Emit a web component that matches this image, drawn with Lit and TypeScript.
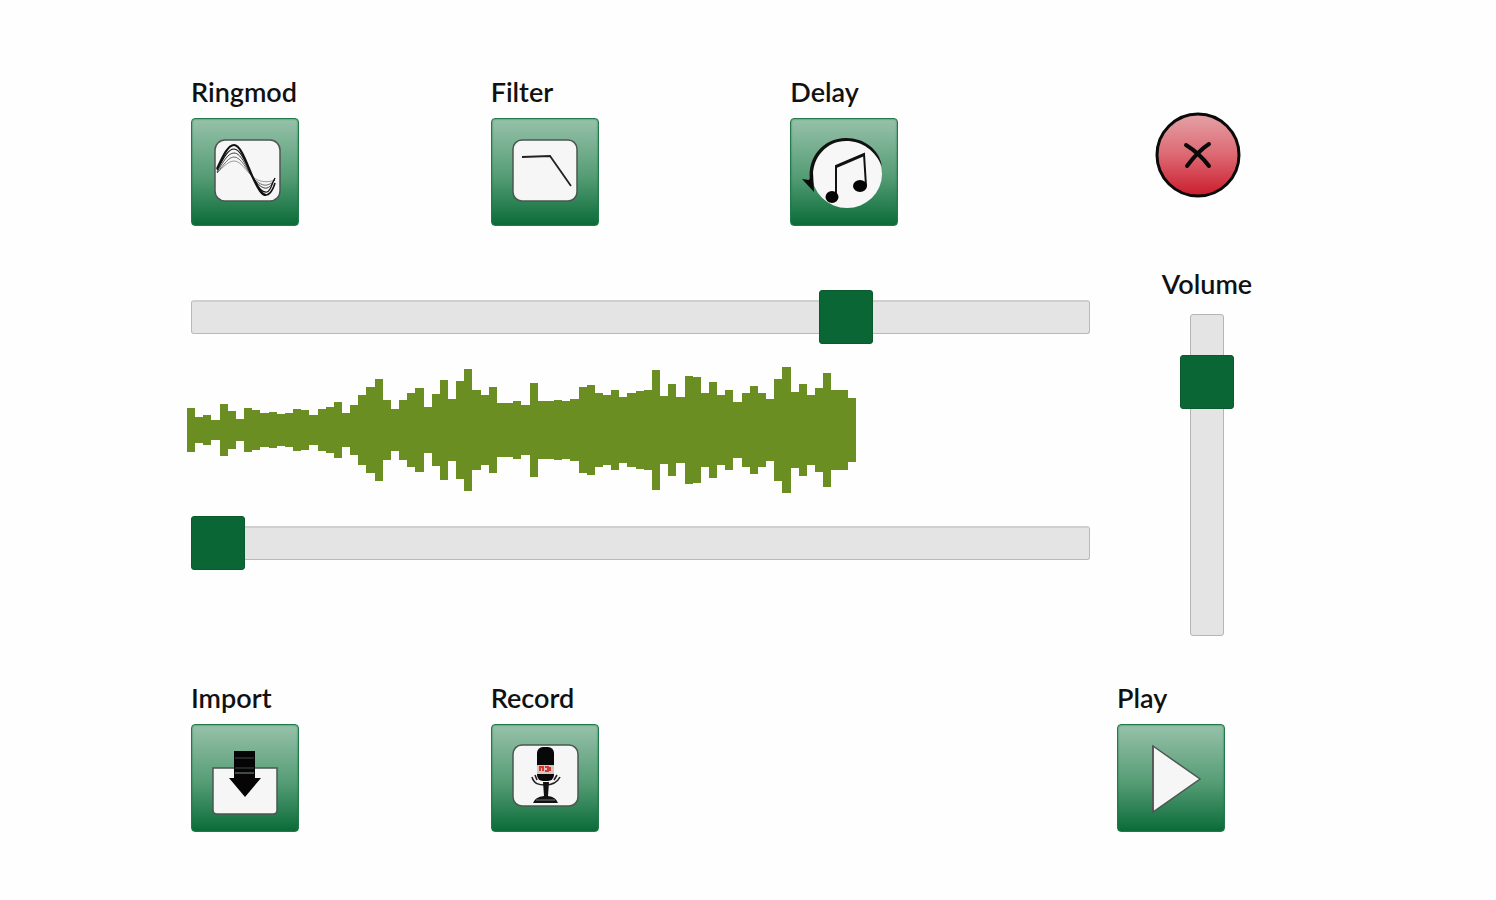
import { LitElement, html, css, svg } from "lit";
import { customElement, state } from "lit/decorators.js";

// Peak amplitude of each waveform bar, drawn mirrored around the centre line.
const PEAKS = [
  66, 40, 46, 30, 78, 56, 34, 66, 59, 50, 54, 48, 50, 64, 60, 44, 62, 70, 84, 52, 74, 105, 130, 154,
  90, 63, 90, 110, 126, 69, 109, 150, 94, 147, 184, 121, 104, 128, 80, 80, 88, 75, 141, 87, 87, 91,
  86, 93, 128, 136, 112, 106, 120, 98, 110, 116, 120, 179, 102, 138, 99, 162, 158, 110, 144, 106,
  120, 85, 110, 133, 110, 92, 153, 190, 114, 138, 105, 126, 171, 121, 121, 95,
];

const icons = {
  ringmod: svg`
    <rect class="panel" x="24" y="22" width="65" height="61" rx="10"></rect>
    <g fill="none" stroke="#111">
      <path stroke-width="2.2" d="M26 51C32 38 37 27 43 27C51 27 58 53 64 64C68 72 71 77 75 77"></path>
      <path stroke-width="1.2" d="M26 52C32 41 37 31 43 31C51 31 58 54 64 63C68 70 71 75 76 74C80 73 81 65 84 60"></path>
      <path stroke-width="1" opacity=".8" d="M26 54C32 44 37 35 43 35C51 35 56 52 63 61C67 67 72 71 76 70C80 69 82 64 84 60"></path>
      <path stroke-width="1" opacity=".6" d="M26 55C33 46 38 39 43 39C50 39 56 52 62 60C67 65 72 68 76 67C80 66 82 64 84 62"></path>
      <path stroke-width="1" opacity=".4" d="M26 55C33 48 38 43 43 43C50 43 55 53 62 59C68 64 76 65 84 62"></path>
      <path stroke-width="1.6" d="M71 75C77 81 82 72 84 65"></path>
    </g>`,
  filter: svg`
    <rect class="panel" x="22" y="22" width="64" height="61" rx="9"></rect>
    <path d="M31 39L59 38L80 68" fill="none" stroke="#222" stroke-width="1.8"></path>`,
  delay: svg`
    <ellipse cx="57" cy="56" rx="35" ry="34" fill="#f7f7f7"></ellipse>
    <path d="M20 62C17 40 33 20 56 20C74 20 89 31 92 48C85 33 73 23 56 23C37 23 22 39 23 60Z" fill="#111"></path>
    <path d="M12 61L19 62L23 54L24 74Z" fill="#0a0a0a"></path>
    <path d="M46 78V48L74 36L76 68" fill="none" stroke="#111" stroke-width="2"></path>
    <path d="M46 49L74 37" stroke="#111" stroke-width="2.4"></path>
    <ellipse cx="42" cy="79" rx="6.5" ry="6" fill="#050505"></ellipse>
    <ellipse cx="70" cy="68" rx="7" ry="6" fill="#050505"></ellipse>`,
  import: svg`
    <path class="panel" d="M22 44H86V86Q86 90 82 90H26Q22 90 22 86Z"></path>
    <path d="M43 27H64V54H70L54 73L38 54H43Z" fill="#050505"></path>
    <path d="M44 34H63M44 44H63" stroke="#3f4a44" stroke-width="1"></path>
    <path d="M44 49H63" stroke="#8b8b8b" stroke-width="1"></path>`,
  record: svg`
    <rect class="panel" x="22" y="21" width="65" height="61" rx="9"></rect>
    <rect x="46" y="23" width="17" height="34" rx="6" fill="#080808"></rect>
    <rect x="46" y="41" width="17" height="9" fill="#d8c4c2"></rect>
    <path d="M49 47V43H52V47M54 43H57V47H54M59 43V47" fill="none" stroke="#d4392f" stroke-width="2"></path>
    <path d="M41 53C43 60 48 61 54 61C61 61 66 59 69 53M44 51L46 56M66 51L63 56" fill="none" stroke="#222" stroke-width="1.6"></path>
    <path d="M52 58H58L57 72Q65 73 67 79H42Q44 73 53 72Z" fill="#111"></path>
    <path d="M45 76H64" stroke="#777" stroke-width="1"></path>`,
  play: svg`
    <path class="panel" d="M36 22L83 55L36 88Z"></path>
    <path d="M36 22V88" stroke="#555" stroke-width="1.5"></path>`,
};

type IconName = keyof typeof icons;

@customElement("tool-button")
class ToolButton extends LitElement {
  static properties = { label: {}, icon: {} };
  declare label: string;
  declare icon: IconName;

  static styles = css`
    :host {
      display: block;
    }
    .tool {
      display: flex;
      flex-direction: column;
      align-items: flex-start;
      gap: 12px;
      padding: 0;
      border: 0;
      background: none;
      color: #111;
      font: 600 27px/28px Lato, "Liberation Sans", sans-serif;
      cursor: pointer;
    }
    .face {
      box-sizing: border-box;
      display: block;
      width: 108px;
      height: 108px;
      border: 1px solid #217a4a;
      border-radius: 4px;
      background: linear-gradient(#97c1aa, #549c74 55%, #11703e 96%, #0a6836);
      box-shadow: inset 0 0 2px #1a7543;
    }
    .icon {
      display: block;
      width: 108px;
      height: 108px;
      margin: -1px;
    }
    .panel {
      fill: #f6f6f6;
      stroke: #4b5750;
      stroke-width: 1.5;
    }
  `;

  render() {
    return html`
      <button class="tool" type="button">
        <span>${this.label}</span>
        <span class="face">
          <svg class="icon" viewBox="0 0 108 108" aria-hidden="true">${icons[this.icon]}</svg>
        </span>
      </button>
    `;
  }
}

@customElement("app-root")
class AppRoot extends LitElement {
  @state() private end = 745;
  @state() private start = 0;
  @state() private volume = 854;

  static styles = css`
    :host {
      display: block;
      min-height: 100vh;
      background: #fefefe;
      color: #111;
      font: 600 27px/28px Lato, "Liberation Sans", sans-serif;
    }
    .board {
      display: grid;
      grid-template-columns: 1fr 162px;
      gap: 44px 27px;
      padding: 78px 217px 64px 191px;
    }
    .tools {
      display: grid;
      grid-template-columns: repeat(3, 1fr);
    }
    .corner {
      display: flex;
      justify-content: center;
      align-items: flex-start;
      padding-top: 34px;
    }
    .close {
      width: 86px;
      height: 86px;
      padding: 0;
      border: 0;
      border-radius: 50%;
      background: none;
      cursor: pointer;
    }
    .cross {
      display: block;
      width: 86px;
      height: 86px;
    }
    .editor {
      display: flex;
      flex-direction: column;
      gap: 22px;
      padding: 20px 0;
    }
    .wave {
      display: block;
      width: 74.4%;
      height: 128px;
      margin-left: -4px;
      fill: #6b8e23;
      shape-rendering: crispEdges;
    }
    .range {
      appearance: none;
      display: block;
      width: 100%;
      height: 54px;
      margin: 0;
      background: none;
    }
    .range::-webkit-slider-runnable-track {
      box-sizing: border-box;
      height: 34px;
      border: 1px solid #b9b9b9;
      border-top: 2px solid #cfcfcf;
      border-radius: 3px;
      background: #e4e4e4;
    }
    .range::-webkit-slider-thumb {
      appearance: none;
      box-sizing: border-box;
      width: 54px;
      height: 54px;
      margin: -12px -1px 0;
      border: 1px solid #0b5a2c;
      border-radius: 3px;
      background: #0a6634;
    }
    .volume {
      display: flex;
      flex-direction: column;
      align-items: center;
      gap: 16px;
      padding: 0 0 4px 18px;
    }
    .range.upright {
      writing-mode: vertical-lr;
      direction: rtl;
      width: 54px;
      height: 322px;
    }
    .upright::-webkit-slider-runnable-track {
      width: 34px;
      height: 100%;
      border: 1px solid #b5b5b5;
    }
    .upright::-webkit-slider-thumb {
      margin: -1px 0 -1px -11px;
    }
  `;

  render() {
    return html`
      <main class="board">
        <div class="tools">
          <tool-button label="Ringmod" icon="ringmod"></tool-button>
          <tool-button label="Filter" icon="filter"></tool-button>
          <tool-button label="Delay" icon="delay"></tool-button>
        </div>
        <div class="corner">
          <button class="close" type="button" aria-label="Close">
            <svg class="cross" viewBox="0 0 86 86" aria-hidden="true">
              <defs>
                <linearGradient id="red" x1="0" y1="0" x2="0" y2="1">
                  <stop offset="0" stop-color="#e5a2a7"></stop>
                  <stop offset=".5" stop-color="#dc6872"></stop>
                  <stop offset="1" stop-color="#cb1c2c"></stop>
                </linearGradient>
              </defs>
              <circle cx="43" cy="43" r="41" fill="url(#red)" stroke="#0a0a0a" stroke-width="3"></circle>
              <path d="M31 33C39 38 48 46 54 54" fill="none" stroke="#0a0a0a" stroke-width="4" stroke-linecap="round"></path>
              <path d="M54 32C46 37 38 46 32 54" fill="none" stroke="#0a0a0a" stroke-width="4" stroke-linecap="round"></path>
            </svg>
          </button>
        </div>

        <div class="editor">
          <input class="range" type="range" min="0" max="1000" aria-label="End position"
            .value=${String(this.end)}
            @input=${(e: Event) => (this.end = +(e.target as HTMLInputElement).value)} />
          <svg class="wave" viewBox="0 -192 82 384" preserveAspectRatio="none" role="img" aria-label="Waveform">
            ${PEAKS.map((p, i) => svg`<rect x=${i} y=${-p} width="1" height=${p * 2}></rect>`)}
          </svg>
          <input class="range" type="range" min="0" max="1000" aria-label="Start position"
            .value=${String(this.start)}
            @input=${(e: Event) => (this.start = +(e.target as HTMLInputElement).value)} />
        </div>
        <div class="volume">
          <label for="volume">Volume</label>
          <input class="range upright" id="volume" type="range" min="0" max="1000"
            .value=${String(this.volume)}
            @input=${(e: Event) => (this.volume = +(e.target as HTMLInputElement).value)} />
        </div>

        <div class="tools">
          <tool-button label="Import" icon="import"></tool-button>
          <tool-button label="Record" icon="record"></tool-button>
        </div>
        <tool-button label="Play" icon="play"></tool-button>
      </main>
    `;
  }
}
